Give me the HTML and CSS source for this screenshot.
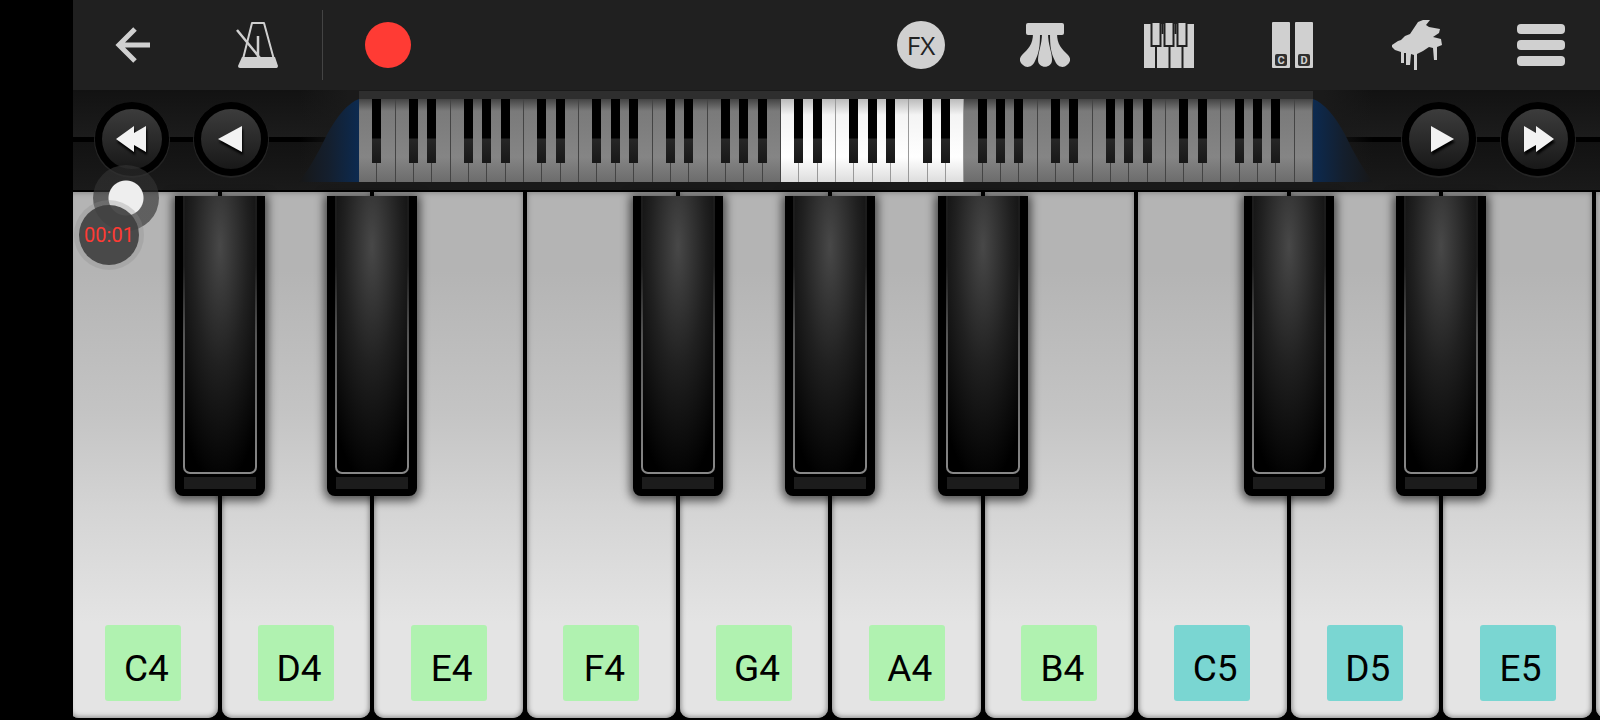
FILE: index.html
```
<!DOCTYPE html>
<html lang="en">
<head>
  <meta charset="utf-8">
  <title>Piano</title>
  <link rel="stylesheet" href="styles.css">
</head>
<body>
  <div class="app">
    <header class="toolbar">
      <button class="tool" aria-label="Back">
        <svg width="36" height="36" viewBox="0 0 36 36" fill="none" stroke="#d0d0d0" stroke-width="5">
          <path d="M35 18H5M20 2L4 18l16 16"/>
        </svg>
      </button>
      <button class="tool" aria-label="Metronome">
        <svg width="44" height="48" viewBox="0 0 44 48">
          <path d="M17 2h12l12 44H6z" fill="none" stroke="#d0d0d0" stroke-width="2" stroke-linejoin="round"/>
          <path d="M7 36h33l3 9q0 2-2 2H5q-2 0-2-2z" fill="#d0d0d0"/>
          <path d="M23 15v22M2 9l23 28" stroke="#d0d0d0" stroke-width="2.5"/>
        </svg>
      </button>
      <span class="divider"></span>
      <button class="tool" aria-label="Record"><span class="record"></span></button>
      <span class="spacer"></span>
      <button class="tool"><span class="fx">FX</span></button>
      <button class="tool" aria-label="Pedals">
        <svg width="50" height="46" viewBox="0 0 50 46" fill="#d0d0d0">
          <path d="M6 3q0-2 2-2h34q2 0 2 2v8q0 2-2 2H8q-2 0-2-2z"/>
          <path d="M13 11h7c0 14-1 20-5 28-3 7-9 7-12 4-4-3-4-7-1-10 6-6 11-10 11-22z"/>
          <path d="M22 11h6c0 12 4 19 4 27 0 9-14 9-14 0 0-8 4-15 4-27z"/>
          <path d="M37 11h-7c0 14 1 20 5 28 3 7 9 7 12 4 4-3 4-7 1-10-6-6-11-10-11-22z"/>
        </svg>
      </button>
      <button class="tool" aria-label="Keyboard size">
        <svg width="50" height="46" viewBox="0 0 50 46">
          <path d="M0 2h50v44H0z" fill="#d0d0d0"/>
          <path d="M12 24v22M25.500 24v22M38.500 24v22M18.500 2v10M31.500 2v10" stroke="#202020" stroke-width="2"/>
          <path d="M7.500 0h9v24h-9zM20.500 0h9v24h-9zM33.500 0h9v24h-9z" fill="#d0d0d0" stroke="#202020" stroke-width="2"/>
        </svg>
      </button>
      <button class="tool" aria-label="Key labels">
        <svg width="42" height="46" viewBox="0 0 42 46">
          <rect width="18" height="46" rx="1" fill="#d0d0d0"/>
          <rect x="23" width="18" height="46" rx="1" fill="#d0d0d0"/>
          <rect x="3" y="32" width="12" height="12" rx="2" fill="#303030"/>
          <rect x="26" y="32" width="12" height="12" rx="2" fill="#303030"/>
          <text x="9" y="42" class="tiny">C</text>
          <text x="32" y="42" class="tiny">D</text>
        </svg>
      </button>
      <button class="tool" aria-label="Instrument">
        <svg width="50" height="50" viewBox="0 0 50 50" fill="#d0d0d0">
          <path d="M0 25l6-4 3-1 4-4 5-2 8-12 5-2h7l-4 5 3 2 11 2-1 4-6 4 8 2 1 6-5 2v13h-3l-1-12-4-1-6 4-6 3v16h-3V35l-3-1-1 11h-4V33h-2v10h-3V32l-6-2-3-3z"/>
        </svg>
      </button>
      <button class="tool" aria-label="Menu">
        <span class="menu"><i></i><i></i><i></i></span>
      </button>
    </header>

    <nav class="navigator">
      <button class="knob" aria-label="Octave down">
        <svg width="32" height="28" viewBox="0 0 32 28"><path d="M0 14L18 1v7L30 1v26l-12-7v7z"/></svg>
      </button>
      <button class="knob" aria-label="Key down">
        <svg width="32" height="28" viewBox="0 0 32 28"><path d="M3 14L27 1v26z"/></svg>
      </button>
      <div class="overview">
        <svg class="wing" viewBox="0 0 60 84" preserveAspectRatio="none">
          <defs>
            <linearGradient id="blue">
              <stop offset="0" stop-color="#171717"/>
              <stop offset="0.5" stop-color="#141f2e"/>
              <stop offset="1" stop-color="#0c2a50"/>
            </linearGradient>
          </defs>
          <path d="M60 0Q44 6 28 36 14 66 0 84h60z" fill="url(#blue)"/>
        </svg>
        <div class="mini" id="mini"></div>
        <svg class="wing right" viewBox="0 0 60 84" preserveAspectRatio="none">
          <path d="M60 0Q44 6 28 36 14 66 0 84h60z" fill="url(#blue)"/>
        </svg>
      </div>
      <button class="knob" aria-label="Key up">
        <svg width="32" height="28" viewBox="0 0 32 28"><path d="M31 14L8 1v26z"/></svg>
      </button>
      <button class="knob" aria-label="Octave up">
        <svg width="32" height="28" viewBox="0 0 32 28"><path d="M32 14L14 1v7L2 1v26l12-7v7z"/></svg>
      </button>
    </nav>

    <main class="keyboard" id="keyboard"></main>

    <div class="touch"></div>
    <div class="timer">00:01</div>
  </div>

  <script>
    var hasSharp = { C: true, D: true, F: true, G: true, A: true };

    // full 88 key overview, starts at A0
    var letters = 'ABCDEFG';
    var mini = document.getElementById('mini');
    for (var i = 0; i < 52; i++) {
      var letter = letters[i % 7];
      var small = document.createElement('span');
      small.className = 'mini-key';
      if (i >= 23 && i < 33) small.className += ' active';
      if (hasSharp[letter] && i < 51) small.className += ' sharp';
      mini.appendChild(small);
    }

    // playable keys
    var notes = ['C4', 'D4', 'E4', 'F4', 'G4', 'A4', 'B4', 'C5', 'D5', 'E5'];
    var keyboard = document.getElementById('keyboard');
    notes.forEach(function(note) {
      var slot = document.createElement('div');
      slot.className = 'slot';
      slot.innerHTML = '<button class="white"><span class="note octave-' + note[1] + '">' + note + '</span></button>';
      if (hasSharp[note[0]]) {
        slot.innerHTML += '<button class="black" aria-label="' + note[0] + ' sharp ' + note[1] + '"><span class="face"></span><span class="lip"></span></button>';
      }
      keyboard.appendChild(slot);
    });

    // edge of the next key, too narrow for a label
    var next = document.createElement('div');
    next.className = 'slot';
    next.innerHTML = '<button class="white" aria-label="F5"></button>';
    keyboard.appendChild(next);
  </script>
</body>
</html>
```
FILE: styles.css
```
* {
  box-sizing: border-box;
}

body {
  margin: 0;
  background: #000;
  font-family: Roboto, sans-serif;
}

button {
  border: none;
  padding: 0;
  background: none;
  font-family: inherit;
  cursor: pointer;
}

.app {
  position: relative;
  display: flex;
  flex-direction: column;
  height: 100vh;
  margin-left: 73px;
  overflow: hidden;
}

/* toolbar */
.toolbar {
  display: flex;
  align-items: center;
  gap: 6px;
  height: 90px;
  padding-left: 1px;
  background: #202020;
}

.tool {
  display: flex;
  align-items: center;
  justify-content: center;
  width: 118px;
  height: 90px;
}

.divider {
  width: 1px;
  height: 70px;
  background: #444;
}

.spacer {
  flex: 1;
}

.record {
  width: 46px;
  height: 46px;
  border-radius: 50%;
  background: #ff3b34;
}

.fx {
  width: 48px;
  border-radius: 50%;
  background: #d0d0d0;
  color: #222;
  font-family: "Open Sans", sans-serif;
  font-size: 26px;
  line-height: 48px;
}

.tiny {
  fill: #d0d0d0;
  font-size: 11px;
  font-weight: bold;
  text-anchor: middle;
}

.menu {
  display: flex;
  flex-direction: column;
  gap: 6px;
}

.menu i {
  width: 48px;
  height: 10px;
  border-radius: 4px;
  background: #d0d0d0;
}

/* navigator */
.navigator {
  display: flex;
  align-items: center;
  gap: 25px;
  height: 102px;
  padding: 0 25px 2px 22px;
  border-bottom: 2px solid #000;
  background:
    linear-gradient(#000, #000) 0 47px / 100% 5px no-repeat,
    linear-gradient(#121212, #1c1c1c 47px, #121212 52px, #1a1a1a);
}

.knob {
  display: flex;
  flex-shrink: 0;
  align-items: center;
  justify-content: center;
  width: 74px;
  height: 74px;
  border: 7px solid #000;
  border-radius: 50%;
  background: linear-gradient(#3c3c3c, #181818);
  box-shadow: 0 1px 0 1px #242424;
}

.knob svg {
  fill: #f2f2f2;
  filter: drop-shadow(1px 3px 1px #000);
}

.overview {
  display: flex;
  flex: 1;
  height: 98px;
  margin: 0 4px 0 6px;
  padding: 9px 0 6px;
  background: linear-gradient(90deg, transparent 0, #1a1a1a 50px, #1a1a1a calc(100% - 50px), transparent);
}

.wing {
  width: 60px;
  height: 100%;
}

.wing.right {
  transform: scaleX(-1);
}

.mini {
  display: flex;
  flex: 1;
  box-shadow: 0 -8px 0 #2e2e2e;
}

.mini-key {
  position: relative;
  flex: 1;
  border-right: 1px solid #444;
  background: linear-gradient(#444, #7a7a7a 12px, #858585 70%, #6c6c6c);
}

.mini-key.active {
  border-right-color: #999;
  background: linear-gradient(#bbb, #f4f4f4 16px, #fff 70%, #ddd);
}

.mini-key.sharp::after {
  content: "";
  position: absolute;
  z-index: 1;
  top: 0;
  right: -5px;
  width: 9px;
  height: 64px;
  background: linear-gradient(#000 39px, #262626 40px, #181818);
}

/* keyboard */
.keyboard {
  display: grid;
  flex: 1;
  grid-auto-flow: column;
  grid-auto-columns: 10%;
  margin: 0 6px 0 -6px;
  padding-bottom: 2px;
}

.slot {
  position: relative;
  display: flex;
  padding: 0 2px;
}

.white {
  display: flex;
  flex: 1;
  align-items: flex-end;
  justify-content: center;
  padding-bottom: 17px;
  border-radius: 0 0 10px 10px;
  background: linear-gradient(#b4b4b4 15%, #c4c4c4 42%, #d4d4d4 60%, #e4e4e4 82%);
  box-shadow: inset 0 0 5px 1px #888;
}

.note {
  width: 76px;
  height: 76px;
  padding: 6px 0 0 6px;
  border-radius: 3px;
  color: #000;
  font-size: 37px;
  line-height: 76px;
}

.octave-4 {
  background: #b0f2b0;
}

.octave-5 {
  background: #7ad6d2;
}

.black {
  position: absolute;
  z-index: 1;
  top: 4px;
  right: -45px;
  display: flex;
  flex-direction: column;
  align-items: center;
  gap: 3px;
  width: 90px;
  height: 57%;
  padding-bottom: 7px;
  border-radius: 0 0 8px 8px;
  background: #000;
  box-shadow: 0 2px 10px 3px rgba(0, 0, 0, 0.6);
}

/* the outline fades out towards the top of the key */
.face {
  flex: 1;
  width: 74px;
  border: 2px solid transparent;
  border-top: none;
  border-radius: 0 0 7px 7px;
  background:
    radial-gradient(ellipse 56px 240px at 50% 50px, #484848, #202020 50%, #000) padding-box,
    linear-gradient(#1c1c1c 25%, #555 50%, #888) border-box;
}

.lip {
  width: 72px;
  height: 12px;
  background: #1c1c1c;
}

/* screen recorder bubble */
.touch {
  position: absolute;
  z-index: 2;
  top: 165px;
  left: 20px;
  width: 66px;
  height: 66px;
  border-radius: 50%;
  background: radial-gradient(circle, #eee 17px, rgba(50, 50, 50, 0.65) 18px);
}

.timer {
  position: absolute;
  z-index: 3;
  top: 205px;
  left: 6px;
  width: 60px;
  border-radius: 50%;
  background: rgba(65, 65, 65, 0.93);
  box-shadow: 0 0 0 5px rgba(140, 140, 140, 0.3);
  color: #ff3b34;
  font-size: 20px;
  line-height: 60px;
  text-align: center;
}
```
